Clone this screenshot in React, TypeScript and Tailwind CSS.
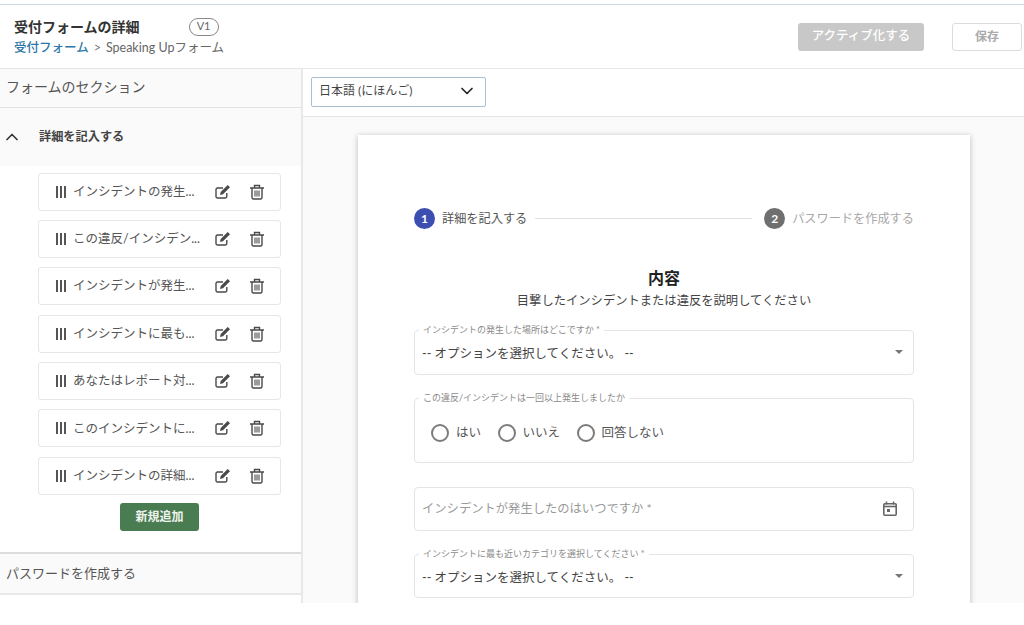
import { ChevronDown, ChevronUp } from "lucide-react";

const items = [
  "インシデントの発生...",
  "この違反/インシデン...",
  "インシデントが発生...",
  "インシデントに最も...",
  "あなたはレポート対...",
  "このインシデントに...",
  "インシデントの詳細...",
];

const EditIcon = () => (
  <svg width="16" height="16" viewBox="0 0 16 16" fill="none" className="text-[#4a4a4a]">
    <path d="M11.800 9v3.500a1.500 1.500 0 0 1-1.500 1.500H2.500A1.500 1.500 0 0 1 1 12.500V5.500A1.500 1.500 0 0 1 2.500 4H8" stroke="currentColor" strokeWidth="1.400" />
    <path d="M5 11l.7-3L12.700 1l2.300 2.300-7 7z" fill="currentColor" />
  </svg>
);

const TrashIcon = () => (
  <svg width="16" height="16" viewBox="0 0 16 16" fill="none" className="text-[#4a4a4a]">
    <path d="M1 4h14M5.500 3.500V1.500h5v2M3 4.500v9a1.500 1.500 0 0 0 1.500 1.500h7a1.500 1.500 0 0 0 1.500-1.500v-9" stroke="currentColor" strokeWidth="1.400" />
    <path d="M6 6.500v6M8 6.500v6M10 6.500v6" stroke="currentColor" strokeWidth="1.100" />
  </svg>
);

const GripIcon = () => (
  <div className="flex gap-[2px]">
    <span className="h-[12px] w-[2px] bg-[#555]" />
    <span className="h-[12px] w-[2px] bg-[#555]" />
    <span className="h-[12px] w-[2px] bg-[#555]" />
  </div>
);

const SelectField = ({ label, className }: { label: string; className: string }) => (
  <div className={`relative flex h-[44.500px] items-center justify-between rounded-[4px] border border-[#e4e4e4] pl-[7px] pr-[10px] ${className}`}>
    <span className="absolute -top-[7px] left-[4px] bg-white px-[4px] text-[9px] leading-[12px] text-[#8a8a8a]">{label}</span>
    <span className="mt-[5px] text-[12.500px] text-[#444]">-- オプションを選択してください。 --</span>
    <span className="h-0 w-0 border-x-[4px] border-t-[4px] border-x-transparent border-t-[#777]" />
  </div>
);

const Radio = ({ label }: { label: string }) => (
  <div className="flex items-center gap-[7px]">
    <span className="h-[18px] w-[18px] rounded-full border-2 border-[#7c7c7c]" />
    <span className="text-[12.500px] text-[#555]">{label}</span>
  </div>
);

export default function App() {
  return (
    <div className="h-[625px] w-[1024px] overflow-hidden bg-white font-['Lato','Noto_Sans_CJK_JP',sans-serif]">
      <div className="flex h-[603px] flex-col">
        <header className="mt-[4px] flex h-[65px] shrink-0 items-center justify-between border-y border-t-[#c9d8e6] border-b-[#e6e6e6] pr-[2px] pl-[14px]">
          <div>
            <div className="flex items-center">
              <span className="text-[14px] leading-[20px] font-bold text-[#333]">受付フォームの詳細</span>
              <span className="ml-[49px] flex h-[18px] w-[30px] items-center justify-center rounded-full border border-[#888] text-[11px] text-[#666]">V1</span>
            </div>
            <div className="mt-[2px] flex items-center text-[12.500px] leading-[18px]">
              <span className="font-medium text-[#2d77a8]">受付フォーム</span>
              <span className="mx-[5px] text-[#777]">&gt;</span>
              <span className="text-[#666]">Speaking Upフォーム</span>
            </div>
          </div>
          <div className="flex items-center gap-[28px]">
            <div className="flex h-[28px] w-[126px] items-center justify-center rounded-[3px] bg-[#c8c8c8] text-[12.500px] font-medium text-white">アクティブ化する</div>
            <div className="flex h-[28px] w-[70px] items-center justify-center rounded-[3px] border border-[#dcdcdc] text-[12px] font-bold text-[#aaa]">保存</div>
          </div>
        </header>

        <div className="flex min-h-0 flex-1">
          <aside className="flex w-[303px] shrink-0 flex-col border-r-2 border-[#e8e8e8]">
            <div className="flex h-[39px] shrink-0 items-center border-b border-[#e2e2e2] bg-[#fafafa] pb-[3px] pl-[6px] text-[14px] text-[#555]">フォームのセクション</div>
            <div className="flex h-[58px] shrink-0 items-center bg-[#fafafa] pl-[2px]">
              <ChevronUp size={20} strokeWidth={2} className="text-[#333]" />
              <span className="ml-[17px] text-[12.200px] font-bold text-[#444]">詳細を記入する</span>
            </div>
            <div className="flex flex-col gap-[9.400px] pt-[6.500px] pr-[20px] pl-[38px]">
              {items.map((item) => (
                <div key={item} className="flex h-[38px] items-center rounded-[3px] border border-[#e6e6e6] pr-[15px] pl-[17px]">
                  <GripIcon />
                  <span className="mt-[1px] ml-[7px] flex-1 text-[12.500px] whitespace-nowrap text-[#555]">{item}</span>
                  <div className="flex items-center gap-[18px]">
                    <EditIcon />
                    <TrashIcon />
                  </div>
                </div>
              ))}
            </div>
            <div className="mt-[8px] flex justify-center pl-[18px]">
              <div className="flex h-[28px] w-[79px] items-center justify-center rounded-[3px] bg-[#4a7c52] text-[12px] font-bold text-[#eef3ee]">新規追加</div>
            </div>
            <div className="mt-[21px] flex h-[43px] shrink-0 items-center border-y-2 border-t-[#dcdcdc] border-b-[#e8e8e8] bg-[#fafafa] pl-[6px] text-[13px] text-[#555]">パスワードを作成する</div>
          </aside>

          <main className="flex min-w-0 flex-1 flex-col">
            <div className="flex h-[48px] shrink-0 items-center border-b border-[#e6e6e6] pb-[2px] pl-[8px]">
              <div className="flex h-[30px] w-[175px] items-center justify-between rounded-[2px] border border-[#a9bfd3] pr-[8px] pb-[2px] pl-[7px]">
                <span className="text-[12px] text-[#444]">日本語 (にほんご)</span>
                <ChevronDown size={20} strokeWidth={2} className="text-[#222]" />
              </div>
            </div>
            <div className="min-h-0 flex-1 overflow-hidden bg-[#fafafa] pt-[18px] pl-[55px]">
              <div className="h-[500px] w-[612px] bg-white px-[56px] pt-[73px] shadow-[0_1px_6px_rgba(0,0,0,0.25)]">
                <div className="flex items-center">
                  <span className="flex h-[21px] w-[21px] items-center justify-center rounded-full bg-[#3c4fb0] text-[12px] font-bold text-white">1</span>
                  <span className="mt-[1px] ml-[7px] text-[12.200px] text-[#555]">詳細を記入する</span>
                  <span className="mr-[12px] ml-[8px] h-px flex-1 bg-[#e2e2e2]" />
                  <span className="flex h-[21px] w-[21px] items-center justify-center rounded-full bg-[#6f6f6f] text-[12px] font-bold text-white">2</span>
                  <span className="mt-[1px] ml-[7px] text-[12.200px] text-[#a8a8a8]">パスワードを作成する</span>
                </div>
                <div className="mt-[37px] text-center text-[16px] leading-[24px] font-bold text-[#222]">内容</div>
                <div className="mt-[2px] text-center text-[12.300px] leading-[18px] text-[#444]">目撃したインシデントまたは違反を説明してください</div>
                <SelectField label="インシデントの発生した場所はどこですか *" className="mt-[20px]" />
                <div className="relative mt-[23.500px] flex h-[65px] items-center gap-[16.500px] rounded-[4px] border border-[#e4e4e4] pt-[5px] pl-[16px]">
                  <span className="absolute -top-[7px] left-[4px] bg-white px-[4px] text-[9px] leading-[12px] text-[#8a8a8a]">この違反/インシデントは一回以上発生しましたか</span>
                  <Radio label="はい" />
                  <Radio label="いいえ" />
                  <Radio label="回答しない" />
                </div>
                <div className="mt-[24px] flex h-[43.500px] items-center justify-between rounded-[4px] border border-[#e4e4e4] pr-[15px] pl-[7px]">
                  <span className="text-[12.300px] text-[#999]">インシデントが発生したのはいつですか *</span>
                  <svg width="16" height="16" viewBox="0 0 16 16" fill="none" className="text-[#666]">
                    <path d="M4.500 0.500v3M11.500 0.500v3" stroke="currentColor" strokeWidth="1.500" />
                    <rect x="1.800" y="2.800" width="12.400" height="11.400" rx="1" stroke="currentColor" strokeWidth="1.600" />
                    <path d="M2 5.500h12" stroke="currentColor" strokeWidth="1.600" />
                    <rect x="5" y="8" width="3" height="3" fill="currentColor" />
                  </svg>
                </div>
                <SelectField label="インシデントに最も近いカテゴリを選択してください *" className="mt-[23px]" />
              </div>
            </div>
          </main>
        </div>
      </div>
    </div>
  );
}
